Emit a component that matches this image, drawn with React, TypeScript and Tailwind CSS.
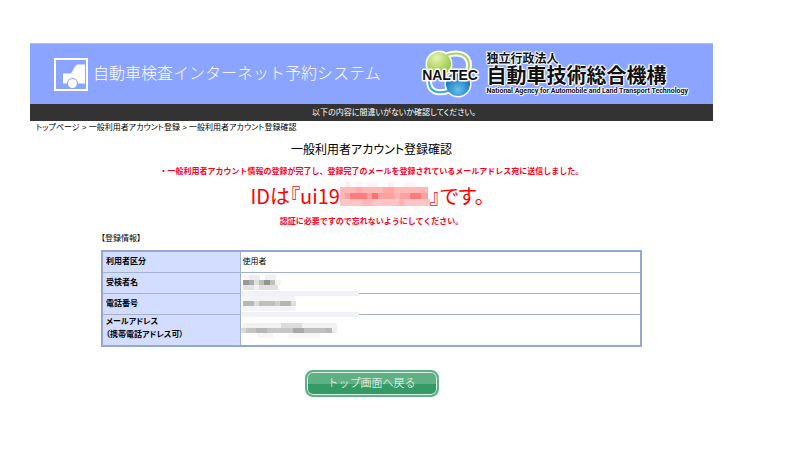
type Block = [x: number, y: number, width: number, height: number, fill: string]

const DETAIL_BLOCKS: Block[] = [
  [0, 0, 118, 71, '#ffffff'],
  [0, 18, 118, 5, '#f1f2f9'],
  [0, 39, 118, 5, '#f1f2f9'],
  [3, 2, 5, 5, '#f6f6f6'],
  [8, 2, 11, 5, '#ececec'],
  [24, 2, 11, 5, '#f0f0f0'],
  [2, 7, 6, 5, '#989898'],
  [8, 7, 5, 5, '#acacac'],
  [13, 7, 5, 5, '#e0e0e0'],
  [18, 7, 5, 5, '#bdbdbd'],
  [23, 7, 6, 5, '#949494'],
  [29, 7, 5, 5, '#c0c0c0'],
  [34, 7, 6, 5, '#f3f3f3'],
  [2, 12, 11, 5, '#e2e2e2'],
  [13, 12, 5, 5, '#f3f3f3'],
  [18, 12, 19, 5, '#e0e0e0'],
  [2, 23, 52, 5, '#f4f4f4'],
  [2, 28, 11, 5, '#b8b8b8'],
  [13, 28, 5, 5, '#dcdcdc'],
  [18, 28, 16, 5, '#bfbfbf'],
  [34, 28, 5, 5, '#cecece'],
  [39, 28, 11, 5, '#b5b5b5'],
  [50, 28, 5, 5, '#dedede'],
  [2, 33, 52, 5, '#f4f4f4'],
  [2, 50, 94, 5, '#f1f1f1'],
  [40, 50, 21, 5, '#dcdcdc'],
  [0, 55, 5, 5, '#dadada'],
  [5, 55, 10, 5, '#c4c4c4'],
  [15, 55, 11, 5, '#b6b6b6'],
  [26, 55, 26, 5, '#c6c6c6'],
  [52, 55, 11, 5, '#a8a8a8'],
  [63, 55, 22, 5, '#c0c0c0'],
  [85, 55, 6, 5, '#b8b8b8'],
  [91, 55, 5, 5, '#eeeeee'],
  [16, 60, 16, 5, '#f6f6f6'],
  [47, 60, 32, 5, '#f6f6f6'],
]

const ID_BLOCKS: Block[] = [
  [5, 0, 6, 5, '#fff0f0'],
  [16, 0, 6, 5, '#fff3f3'],
  [27, 0, 11, 5, '#fff5f5'],
  [48, 0, 6, 5, '#fff0f0'],
  [64, 0, 12, 5, '#fff5f5'],
  [0, 5, 88, 6, '#ffb8b8'],
  [16, 5, 6, 6, '#ffadad'],
  [43, 5, 11, 6, '#ffa8a8'],
  [0, 11, 88, 6, '#ffa0a0'],
  [0, 11, 5, 6, '#ffb8b8'],
  [10, 11, 17, 6, '#ff7c7c'],
  [32, 11, 6, 6, '#ff7070'],
  [54, 11, 6, 6, '#ffb4b4'],
  [70, 11, 11, 6, '#ff7c7c'],
  [0, 17, 90, 7, '#ffc4c4'],
  [21, 17, 11, 7, '#ffb8b8'],
  [59, 17, 5, 7, '#ffb0b0'],
]

interface MaskedProps {
  blocks: Block[]
  className: string
  width: number
  height: number
}

const Masked = ({ blocks, className, width, height }: MaskedProps) => (
  <svg className={className} width={width} height={height} aria-hidden="true" shapeRendering="crispEdges">
    {blocks.map(([x, y, w, h, fill], i) => (
      <rect key={i} x={x} y={y} width={w} height={h} fill={fill} />
    ))}
  </svg>
)

const CarLogo = () => (
  <svg className="h-[33px] w-[34px] shrink-0" viewBox="0 0 34 33" aria-hidden="true">
    <rect x="1" y="1" width="32" height="31" fill="none" stroke="#fff" strokeWidth="2" />
    <path d="M9 15.500h8c2-2 3-7 6-9h8v19h-7a5.700 5.700 0 0 0-11 0H9z" fill="#fff" />
    <circle cx="18.500" cy="25.500" r="5.500" fill="#8aa4ff" />
    <circle cx="18.500" cy="25.500" r="4.500" fill="#fff" />
  </svg>
)

const NaltecLogo = () => (
  <svg className="h-[50px] w-[62px] shrink-0" viewBox="0 0 62 50" role="img" aria-label="NALTEC">
    <defs>
      <radialGradient id="green" cx="0.4" cy="0.25" r="0.7">
        <stop offset="0" stopColor="#e6f5b0" />
        <stop offset="1" stopColor="#93c83e" />
      </radialGradient>
      <radialGradient id="blue" cx="0.5" cy="0.75" r="0.7">
        <stop offset="0" stopColor="#6cc0ea" />
        <stop offset="1" stopColor="#0068b7" />
      </radialGradient>
    </defs>
    <g fill="none" stroke="#fff" strokeWidth="6">
      <path d="M28 6c12-4 22 0 22 10 0 5-2 8-5 10" />
      <path d="M14 25c-6 6-5 16 4 18 5 1 9 0 13-2" />
    </g>
    <circle cx="20" cy="15" r="13.500" fill="#fff" />
    <circle cx="39" cy="35" r="13.500" fill="#fff" />
    <path d="M28 6c12-4 22 0 22 10 0 5-2 8-5 10" fill="none" stroke="#a9d45c" strokeWidth="2" />
    <path d="M14 25c-6 6-5 16 4 18 5 1 9 0 13-2" fill="none" stroke="#3aa6dc" strokeWidth="2" />
    <circle cx="20" cy="15" r="12" fill="url(#green)" />
    <circle cx="39" cy="35" r="12" fill="url(#blue)" />
    <text
      x="31"
      y="31"
      textAnchor="middle"
      className="font-['Liberation_Sans'] text-[14px] font-bold"
      fill="#111"
      stroke="#fff"
      strokeWidth="3"
      strokeLinejoin="round"
      paintOrder="stroke"
    >
      NALTEC
    </text>
  </svg>
)

const outlined =
  '[text-shadow:1px_0_1px_#fff,-1px_0_1px_#fff,0_1px_1px_#fff,0_-1px_1px_#fff,1px_1px_1px_#fff,-1px_-1px_1px_#fff]'

const palt = "[font-feature-settings:'palt']"

const th = 'border border-[#a3b1d6] bg-[#d3ddff] px-[3px] text-left font-bold'
const td = 'border border-[#a3b1d6] px-[2px] align-middle'

const App = () => {
  return (
    <div
      lang="ja"
      className="min-h-screen bg-white pt-[43px] pr-[87px] pl-[30px] font-['Liberation_Sans','Noto_Sans_CJK_JP',sans-serif] text-[8px] text-black"
    >
      <header className="flex h-[61px] items-center border-t border-[#b4bfe0] bg-[#8aa4ff] pl-6">
        <CarLogo />
        <span className="ml-[5px] pb-1 font-['Noto_Sans_CJK_JP',sans-serif] text-base font-light whitespace-nowrap text-white">
          自動車検査インターネット予約システム
        </span>
        <div className="ml-[38px] flex items-center text-[#111]">
          <NaltecLogo />
          <div className={`ml-[6px] pb-[2px] whitespace-nowrap ${outlined}`}>
            <div className="text-[12px] leading-[14px] font-bold">独立行政法人</div>
            <div className="text-[20px] leading-[21px] font-bold">自動車技術総合機構</div>
            <div className="font-['Roboto','Liberation_Sans',sans-serif] text-[7px] leading-[8px] font-bold">
              National Agency for Automobile and Land Transport Technology
            </div>
          </div>
        </div>
      </header>
      <p className={`h-[17px] bg-[#333] pl-[45px] text-center leading-[17px] text-white ${palt}`}>
        以下の内容に間違いがないか確認してください。
      </p>

      <nav className={`pl-[6px] leading-[14px] whitespace-nowrap ${palt}`}>
        <a href="#top">トップページ</a> &gt; <a href="#register">一般利用者アカウント登録</a> &gt;{' '}
        <span>一般利用者アカウント登録確認</span>
      </nav>

      <main className="text-center">
        <h1 className={`mt-[6px] text-[12px] leading-[18px] ${palt}`}>一般利用者アカウント登録確認</h1>
        <p className="mt-[6px] leading-[14px] font-bold text-[#ff0022]">
          ・一般利用者アカウント情報の登録が完了し、登録完了のメールを登録されているメールアドレス宛に送信しました。
        </p>
        <p
          className={`mt-[3px] flex h-[28px] items-center justify-center pr-2 font-['Noto_Sans_CJK_JP',sans-serif] text-[20px] leading-[28px] text-[#ff0000] ${palt}`}
        >
          <span>IDは『ui19</span>
          <Masked className="shrink-0" blocks={ID_BLOCKS} width={90} height={28} />
          <span>』です。</span>
        </p>
        <p className="mt-[5px] leading-[14px] font-bold text-[#ff0022]">
          認証に必要ですので忘れないようにしてください。
        </p>

        <section className="mx-[71px] mt-[3px] text-left">
          <h2 className={`leading-[14px] ${palt}`}>【登録情報】</h2>
          <table className={`mt-1 w-full border-collapse border-2 border-[#97a6d0] leading-[13px] ${palt}`}>
            <tbody>
              <tr className="h-[21px]">
                <th scope="row" className={`w-[138px] align-middle ${th}`}>利用者区分</th>
                <td className={td}>使用者</td>
              </tr>
              <tr className="h-[21px]">
                <th scope="row" className={`align-middle ${th}`}>受検者名</th>
                <td className={`relative ${td}`}>
                  <Masked className="absolute top-0 left-0 z-10" blocks={DETAIL_BLOCKS} width={118} height={71} />
                </td>
              </tr>
              <tr className="h-[21px]">
                <th scope="row" className={`align-middle ${th}`}>電話番号</th>
                <td className={td} />
              </tr>
              <tr className="h-[32px]">
                <th scope="row" className={`align-top ${th}`}>
                  メールアドレス
                  <br />
                  （携帯電話アドレス可）
                </th>
                <td className={td} />
              </tr>
            </tbody>
          </table>
        </section>

        <button
          type="button"
          className="mt-[23px] h-[27px] w-[134px] rounded-lg border-2 border-[#5fb18a] bg-linear-to-b from-[#5fb085] from-50% to-[#349a66] to-50% pb-[3px] font-['Noto_Sans_CJK_JP',sans-serif] text-[11px] leading-[18px] font-light text-white inset-ring inset-ring-[#d9f0e3]"
        >
          トップ画面へ戻る
        </button>
      </main>
    </div>
  )
}

export default App
